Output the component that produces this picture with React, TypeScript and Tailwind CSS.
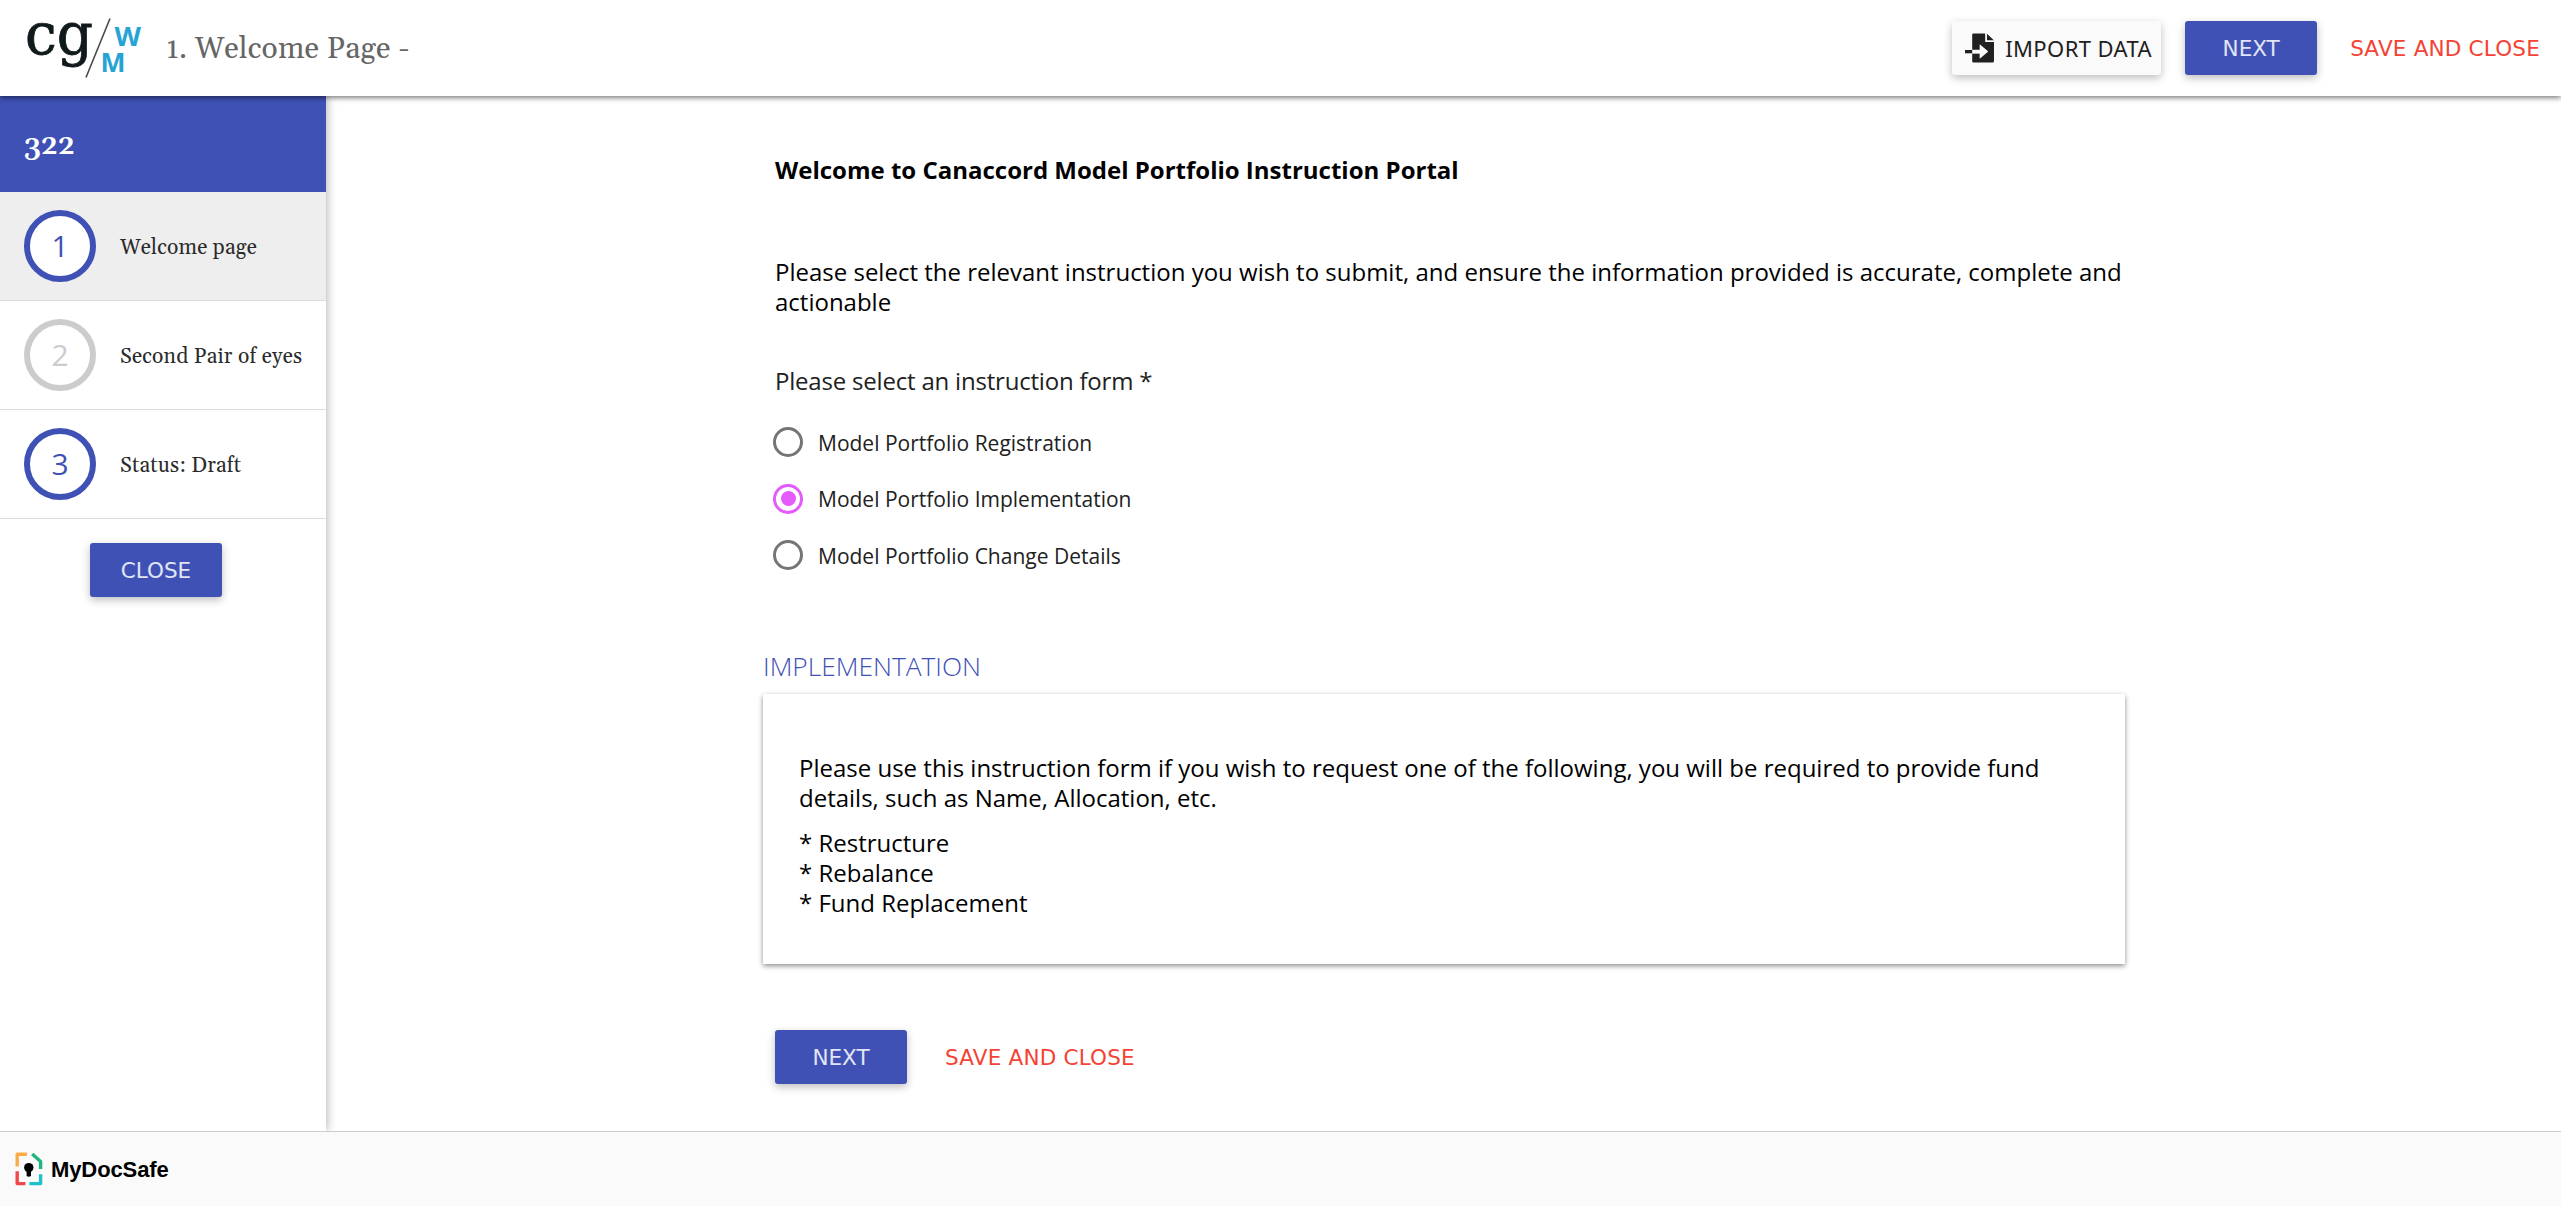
import type { ReactNode } from "react";

function PrimaryButton({ children, className = "" }: { children: ReactNode; className?: string }) {
  return (
    <button
      className={`flex h-[54px] w-[132px] shrink-0 items-center justify-center rounded-[3px] bg-[#3f51b5] pt-[2px] font-['DejaVu_Sans'] text-[21.5px] text-white/85 shadow-[0_3px_8px_rgba(0,0,0,0.26)] ${className}`}
    >
      {children}
    </button>
  );
}

function SaveAndClose({ className = "" }: { className?: string }) {
  return (
    <button
      className={`pt-[2px] font-['DejaVu_Sans'] text-[21.5px] tracking-[0.2px] whitespace-nowrap text-[#f44336] ${className}`}
    >
      SAVE AND CLOSE
    </button>
  );
}

function BrandLogo() {
  return (
    <svg width="120" height="96" viewBox="0 0 120 96" className="shrink-0">
      <text
        x="0"
        y="53.5"
        className="font-['DejaVu_Serif',serif] text-[58px]"
        fill="#10191b"
        stroke="#10191b"
        strokeWidth="0.8"
        textLength="68"
        lengthAdjust="spacingAndGlyphs"
      >
        cg
      </text>
      <path d="M61 77.5 85 18.5" stroke="#4a4a4a" strokeWidth="1.6" fill="none" />
      <g fill="#27a3d4" fontFamily="'Open Sans', sans-serif" fontWeight="700" fontSize="27.5">
        <text x="89.5" y="46" textLength="26.5" lengthAdjust="spacingAndGlyphs">
          W
        </text>
        <text x="75.5" y="71.5" textLength="25" lengthAdjust="spacingAndGlyphs">
          M
        </text>
      </g>
    </svg>
  );
}

function ImportIcon() {
  return (
    <svg width="30" height="30" viewBox="0 0 30 30" className="shrink-0" fill="#212121">
      <path d="M8.5 0.5H20.2V9H29V28q0 1.5-1.5 1.5H8.5q-1.3 0-1.3-1.3V20.7h7.6v4.9l8.2-7.1-8.2-7.1v5.4H7.2V1.8Q7.2.5 8.5.5Z" />
      <path d="M22 .8 28.8 7.3H22Z" />
      <path d="M0 17h15.5v3.3H0z" fill="#212121" />
      <path d="M7.2 17h8.5v3.3H7.2z" fill="#fafafa" />
      <path d="M14.8 11.4 23 18.5 14.8 25.6Z" fill="#fafafa" />
    </svg>
  );
}

function SafeIcon() {
  return (
    <svg
      width="28"
      height="34"
      viewBox="0 0 28 34"
      className="shrink-0"
      fill="none"
      strokeWidth="3.4"
      strokeLinejoin="round"
      strokeLinecap="butt"
    >
      <path d="M12 2.2H2.2V14.6" stroke="#fbab48" />
      <path d="M17.2 2 25.6 9.6V17" stroke="#23b57d" />
      <path d="M25.6 22.2V31.6H14.4" stroke="#20bfcc" />
      <path d="M2.2 19.2V31.6H10.4" stroke="#f0484c" />
      <g fill="#000">
        <circle cx="13.8" cy="15.6" r="4.7" />
        <path d="M11.6 18h4.4v6q-2.2 1.6-4.4 0z" />
      </g>
    </svg>
  );
}

const steps = [
  { n: 1, label: "Welcome page", active: true, muted: false },
  { n: 2, label: "Second Pair of eyes", active: false, muted: true },
  { n: 3, label: "Status: Draft", active: false, muted: false },
];

const options = [
  { label: "Model Portfolio Registration", checked: false },
  { label: "Model Portfolio Implementation", checked: true },
  { label: "Model Portfolio Change Details", checked: false },
];

export default function App() {
  return (
    <div className="flex h-[1206px] w-[2561px] flex-col overflow-hidden bg-white font-['Open_Sans',sans-serif] text-black">
      <header className="relative z-20 flex h-24 shrink-0 items-center bg-white pr-[21px] pl-[25px] shadow-[0_2px_5px_rgba(0,0,0,0.5)]">
        <BrandLogo />
        <h1 className="ml-[21px] pt-[2px] font-['Gelasio',serif] text-[30px] leading-[36px] tracking-[0.2px] text-[#666]">
          1. Welcome Page -
        </h1>
        <div className="ml-auto flex items-center">
          <button className="flex h-[54px] w-[209px] items-center rounded-[3px] bg-[#fafafa] pl-[13px] font-['Noto_Sans'] text-[22px] text-[#212121] shadow-[0_3px_8px_rgba(0,0,0,0.26)]">
            <ImportIcon />
            <span className="ml-[10px] tracking-[0.4px] whitespace-nowrap">IMPORT DATA</span>
          </button>
          <PrimaryButton className="ml-6">NEXT</PrimaryButton>
          <SaveAndClose className="ml-[33px]" />
        </div>
      </header>

      <div className="flex min-h-0 flex-1">
        <aside className="relative z-10 w-[326px] shrink-0 bg-white shadow-[1px_0_9px_rgba(0,0,0,0.3)]">
          <div className="flex h-24 items-center bg-[#3f51b5] pt-[4px] pl-6 font-['Gelasio',serif] text-[28px] font-semibold text-white">
            322
          </div>
          <nav>
            {steps.map((s) => (
              <div
                key={s.n}
                className={`flex h-[109px] items-center border-b border-[#dcdcdc] pl-6 ${s.active ? "bg-[#eee]" : "bg-white"}`}
              >
                <div
                  className={`flex size-[72px] items-center justify-center rounded-full border-[6px] bg-white pb-[2px] text-[30px] ${s.muted ? "border-[#ccc] text-[#ccc]" : "border-[#3f51b5] text-[#3f51b5]"}`}
                >
                  {s.n}
                </div>
                <span className="ml-6 pt-[5px] font-['Gelasio',serif] text-[21px] tracking-[0.2px] whitespace-nowrap text-[#2b2b2b]">
                  {s.label}
                </span>
              </div>
            ))}
          </nav>
          <PrimaryButton className="mt-6 ml-[90px]">CLOSE</PrimaryButton>
        </aside>

        <main className="w-[1799px] pt-[59px] pl-[437px]">
          <div className="pl-3 text-2xl leading-[30px]">
            <h2 className="font-bold">Welcome to Canaccord Model Portfolio Instruction Portal</h2>
            <p className="mt-[72px] whitespace-nowrap">
              Please select the relevant instruction you wish to submit, and ensure the information provided is accurate,
              complete and
              <br />
              actionable
            </p>
            <div className="mt-[49px] tracking-[-0.2px] text-[#212121]">Please select an instruction form *</div>
          </div>
          <div className="mt-[31px] flex flex-col gap-[26.5px] pl-[10px]">
            {options.map((o) => (
              <label key={o.label} className="flex h-[30px] items-center text-[21px] leading-[30px] text-[#212121]">
                <span
                  className={`flex size-[30px] items-center justify-center rounded-full border-[3px] ${o.checked ? "border-[#e659fc]" : "border-[#757575]"}`}
                >
                  {o.checked && <span className="size-[15px] rounded-full bg-[#e659fc]" />}
                </span>
                <span className="ml-[15px] pt-px">{o.label}</span>
              </label>
            ))}
          </div>
          <h3 className="mt-[81px] text-[26.3px] leading-[30px] font-light text-[#3f51b5]">IMPLEMENTATION</h3>
          <section className="mt-[13px] h-[270px] bg-white pt-[59px] pl-9 text-2xl leading-[30px] shadow-[0_2px_5px_rgba(0,0,0,0.45)]">
            <p>
              Please use this instruction form if you wish to request one of the following, you will be required to
              provide fund
              <br />
              details, such as Name, Allocation, etc.
            </p>
            <p className="mt-[15px]">
              * Restructure
              <br />* Rebalance
              <br />* Fund Replacement
            </p>
          </section>
          <div className="mt-[66px] ml-3 flex items-center">
            <PrimaryButton>NEXT</PrimaryButton>
            <SaveAndClose className="ml-[38px]" />
          </div>
        </main>
      </div>

      <footer className="relative z-20 flex h-[75px] shrink-0 items-center border-t border-[#ccc] bg-[#fafafa] pl-[15px]">
        <SafeIcon />
        <span className="ml-[8px] font-['Liberation_Sans'] text-[22px] font-bold tracking-[-0.1px]">MyDocSafe</span>
      </footer>
    </div>
  );
}
